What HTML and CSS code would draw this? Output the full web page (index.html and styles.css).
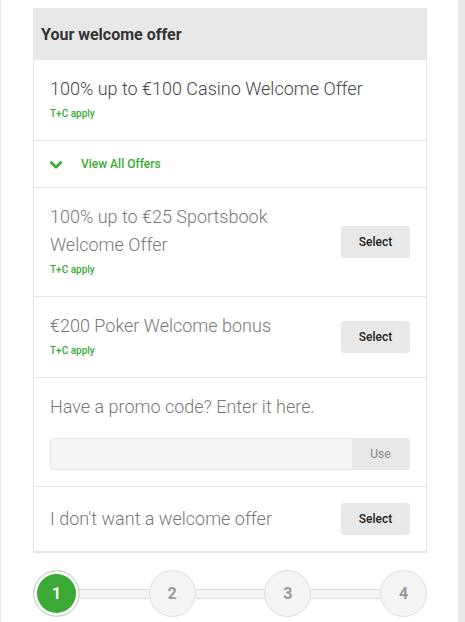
FILE: index.html
```html
<!DOCTYPE html>
<html lang="en">
<head>
<meta charset="utf-8">
<title>Your welcome offer</title>
<link rel="stylesheet" href="styles.css">
</head>
<body>
<div class="page">
  <main class="main">
    <section class="card">
      <header class="card-head">Your welcome offer</header>

      <div class="row">
        <div class="offer">
          <div class="offer-title selected">100% up to €100 Casino Welcome Offer</div>
          <div class="tc">T+C apply</div>
        </div>
      </div>

      <div class="row row-link">
        <svg class="chev" width="12" height="8" viewBox="0 0 12 8" aria-hidden="true">
          <path d="M1.3 1.5 L6 6.2 L10.7 1.5" fill="none" stroke="#3aaa35" stroke-width="2.8" stroke-linecap="round" stroke-linejoin="round"/>
        </svg>
        <span class="link-text">View All Offers</span>
      </div>

      <div class="row">
        <div class="offer">
          <div class="offer-title">100% up to €25 Sportsbook<br>Welcome Offer</div>
          <div class="tc">T+C apply</div>
        </div>
        <button class="btn">Select</button>
      </div>

      <div class="row">
        <div class="offer">
          <div class="offer-title">€200 Poker Welcome bonus</div>
          <div class="tc">T+C apply</div>
        </div>
        <button class="btn">Select</button>
      </div>

      <div class="row row-promo">
        <div class="offer-title">Have a promo code? Enter it here.</div>
        <div class="promo">
          <input class="promo-input" type="text" aria-label="Promo code">
          <button class="promo-btn">Use</button>
        </div>
      </div>

      <div class="row row-none">
        <div class="offer-title">I don't want a welcome offer</div>
        <button class="btn">Select</button>
      </div>
    </section>

    <nav class="stepper">
      <div class="step active">1</div>
      <div class="bar"></div>
      <div class="step">2</div>
      <div class="bar"></div>
      <div class="step">3</div>
      <div class="bar"></div>
      <div class="step">4</div>
    </nav>
  </main>
  <div class="strip"></div>
</div>
</body>
</html>
```

FILE: styles.css
```css
* { box-sizing: border-box; }
html, body { margin: 0; padding: 0; background: #fff; }
body {
  font-family: Roboto, "Liberation Sans", Arial, sans-serif;
  color: #333;
  overflow: hidden;
}
.page {
  display: flex;
  min-height: 100vh;
  border-left: 1px solid #e8e8e8;
}
.main {
  flex: 1;
  padding: 8px 31px 0 32px;
}
.strip {
  width: 7px;
  background: #e8e8e8;
}
.card {
  border-left: 1px solid #e6e6e6;
  border-right: 1px solid #e6e6e6;
  border-bottom: 2px solid #e6e6e6;
  background: #fff;
}
.card-head {
  height: 52px;
  margin: 0 -1px;
  padding: 0 8px;
  background: #e8e8e8;
  display: flex;
  align-items: center;
  font-size: 16px;
  font-weight: 700;
  color: #333;
}
.row {
  display: flex;
  align-items: center;
  justify-content: space-between;
  padding: 0 16px;
  border-top: 1px solid #e6e6e6;
}
.card-head + .row { border-top: 0; }
.offer { padding: 15px 0 19px; }
.offer-title {
  font-size: 18px;
  font-weight: 300;
  line-height: 28px;
  color: #777;
}
.offer-title.selected { color: #444; }
.tc {
  margin-top: 4px;
  font-size: 10px;
  font-weight: 500;
  line-height: 14px;
  color: #3aaa35;
}
.row-link {
  justify-content: flex-start;
  height: 47px;
}
.chev { display: block; margin-right: 19px; margin-top: 1px; }
.link-text {
  font-size: 12px;
  font-weight: 500;
  color: #3aaa35;
}
.btn {
  width: 69px;
  height: 32px;
  border: 0;
  border-radius: 3px;
  background: #e8e8e8;
  font-family: inherit;
  font-size: 12px;
  font-weight: 500;
  color: #222;
  padding: 0;
}
.row-promo {
  display: block;
  padding: 15px 16px 16px;
}
.promo {
  display: flex;
  margin-top: 17px;
  height: 32px;
  border: 1px solid #e6e6e6;
  border-radius: 3px;
  overflow: hidden;
  background: #f4f4f4;
}
.promo-input {
  flex: 1;
  border: 0;
  background: #f4f4f4;
  outline: none;
  padding: 0 8px;
}
.promo-btn {
  width: 57px;
  border: 0;
  background: #e8e8e8;
  font-family: inherit;
  font-size: 12px;
  color: #888;
  padding: 0;
}
.row-none { padding: 16px; }
.stepper {
  display: flex;
  align-items: center;
  margin-top: 17px;
}
.step {
  width: 47px;
  height: 47px;
  flex: none;
  border: 1px solid #dcdcdc;
  border-radius: 50%;
  background: #f4f4f4;
  display: flex;
  align-items: center;
  justify-content: center;
  font-size: 16px;
  font-weight: 700;
  color: #999;
}
.step.active {
  background: #3aaa35;
  box-shadow: inset 0 0 0 3px #fff;
  color: #fff;
}
.bar {
  flex: 1;
  height: 10px;
  background: #f4f4f4;
  border-top: 1px solid #dcdcdc;
  border-bottom: 1px solid #dcdcdc;
}
```
